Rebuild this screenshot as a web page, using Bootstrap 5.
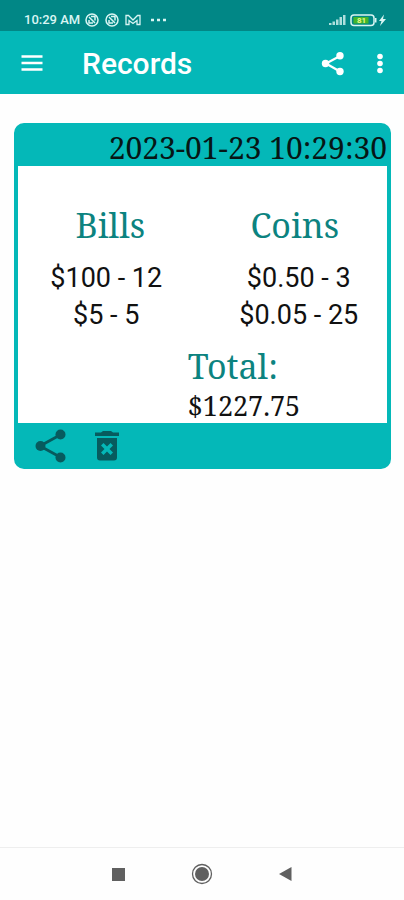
<!DOCTYPE html>
<html lang="en">
<head>
<meta charset="utf-8">
<meta name="viewport" content="width=device-width, initial-scale=1">
<title>Records</title>
<link href="https://cdn.jsdelivr.net/npm/bootstrap@5.3.0/dist/css/bootstrap.min.css" rel="stylesheet">
<style>
  :root { --teal: #04b8b8; --teal-dark: #018786; --ink: #075b5e; }
  body { font-family: Roboto, sans-serif; background: #fefefe; color: #111; }
  .status-strip { height: 31px; padding: 8px 17px 0 24px; background: var(--teal-dark); color: #d9f5f3; font-size: 13px; line-height: 24px; font-weight: 500; }
  .app-bar { height: 63px; padding: 2px 12px 0 20px; background: var(--teal); color: #fff; }
  .app-title { font-size: 30px; line-height: 36px; font-weight: 500; margin-left: 38px; }
  .icon-btn { padding: 0; border: 0; background: none; color: inherit; display: flex; }
  .record { border: 4px solid var(--teal); border-radius: 10px; background: var(--teal); margin: 29px 13px 0 14px; }
  .serif { font-family: "Noto Serif", "Liberation Serif", serif; }
  .stamp { font-size: 30px; line-height: 42px; height: 39px; color: #061616; }
  .heading { font-size: 34px; line-height: 46px; color: #0c8380; font-weight: 400; margin: 0; }
  .record-body { padding-top: 36px; background: #fff; }
  .lines { font-size: 27px; line-height: 37px; margin-top: 12px; }
  .total { padding-top: 9px; margin-left: 46%; }
  .amount { font-size: 27px; line-height: 34px; }
  .record-foot { color: var(--ink); height: 42px; padding: 4px 0 0 17px; gap: 28px; }
  .nav-strip { height: 53px; border-top: 1px solid #eee; color: #606060; padding: 0 111px; }
</style>
<script src="https://cdn.jsdelivr.net/npm/bootstrap@5.3.0/dist/js/bootstrap.bundle.min.js"></script>
</head>
<body class="min-vh-100 d-flex flex-column">
<div class="status-strip d-flex align-items-center">
  <span>10:29 AM</span>
  <svg class="ms-1" width="84" height="16" viewBox="0 0 84 16" fill="none" stroke="currentColor" stroke-width="1.5" aria-hidden="true">
    <g id="sync"><circle cx="8" cy="8" r="6"/><path d="M5 5l6 6M7 4.500h4v4M5 8v3h4"/></g>
    <use href="#sync" x="20"/>
    <path d="M42 12.500V3.500h2.500L49 8l4.500-4.500H56v9h-3V8.500l-4 3-4-3v4z" stroke-width="1.300"/>
    <path d="M67 8h3M73 8h3M79 8h3" stroke-width="2.600"/>
  </svg>
  <svg class="ms-auto" width="58" height="16" viewBox="0 0 58 16" aria-hidden="true">
    <path d="M0 13v-2h2.500v2zM3.500 13V9.500H6V13zM7 13V7.500h2.500V13zM10.500 13V5H13v8zM14 13V3h2.500v10z" fill="currentColor" opacity=".8"/>
    <rect x="22" y="3" width="23" height="10.500" rx="3" fill="none" stroke="currentColor" stroke-width="1.500"/>
    <path d="M46 6h1.500v4.500H46z" fill="currentColor"/>
    <rect x="24.500" y="5" width="15" height="6.500" fill="#42b52b"/>
    <text x="28" y="11" font-size="8" font-weight="700" fill="#eaf98b">81</text>
    <path d="M55 2.500l-5 6.500h2.500L51 14l6-7h-3z" fill="currentColor"/>
  </svg>
</div>
<header class="app-bar d-flex align-items-center">
  <button class="icon-btn" type="button" aria-label="Menu">
    <svg width="24" height="24" viewBox="0 0 24 24" fill="none" stroke="currentColor" stroke-width="2.400"><path d="M1.500 4.500h21M1.500 11h21M1.500 17.500h21"/></svg>
  </button>
  <h1 class="app-title mb-0">Records</h1>
  <button class="icon-btn ms-auto" type="button" aria-label="Share records">
    <svg width="24" height="24" viewBox="0 0 24 24" fill="currentColor"><path d="M20 4L6 11.500l14 8" fill="none" stroke="currentColor" stroke-width="2.200"/><circle cx="20" cy="3.700" r="3.700"/><circle cx="5.500" cy="11.500" r="3.700"/><circle cx="20" cy="19.500" r="3.700"/></svg>
  </button>
  <button class="icon-btn ms-4" type="button" aria-label="More options">
    <svg width="24" height="24" viewBox="0 0 24 24" fill="currentColor"><circle cx="12" cy="4.500" r="2.800"/><circle cx="12" cy="11.500" r="2.800"/><circle cx="12" cy="18.500" r="2.800"/></svg>
  </button>
</header>
<main class="flex-grow-1">
  <article class="record">
    <div class="stamp serif text-end">2023-01-23 10:29:30</div>
    <div class="record-body">
      <div class="row g-0 text-center">
        <section class="col-6"><h2 class="heading serif">Bills</h2><div class="lines pe-2"><div>$100 - 12</div><div>$5 - 5</div></div></section>
        <section class="col-6"><h2 class="heading serif">Coins</h2><div class="lines ps-2"><div>$0.50 - 3</div><div>$0.05 - 25</div></div></section>
      </div>
      <div class="total serif"><h2 class="heading serif">Total:</h2><div class="amount">$1227.75</div></div>
    </div>
    <div class="record-foot d-flex align-items-center">
      <button class="icon-btn" type="button" aria-label="Share record">
        <svg width="32" height="34" viewBox="0 0 32 34" fill="currentColor"><path d="M25 6L5 17l20 11" fill="none" stroke="currentColor" stroke-width="2.800"/><circle cx="25.500" cy="5.500" r="5"/><circle cx="5.500" cy="17" r="5"/><circle cx="25.500" cy="28.500" r="5"/></svg>
      </button>
      <button class="icon-btn" type="button" aria-label="Delete record">
        <svg width="24" height="32" viewBox="0 0 24 32" fill="currentColor"><path d="M0 2.500h6L8 1h8l2 1.500h6V6H0z"/><path fill-rule="evenodd" d="M2 8h20v19.500a3 3 0 0 1-3 3H5a3 3 0 0 1-3-3zM6 15.500l3.500 3.500L6 22.500l2.500 2.500 3.500-3.500 3.500 3.500 2.500-2.500-3.500-3.500 3.500-3.500-2.500-2.500-3.500 3.500L8.500 13z"/></svg>
      </button>
    </div>
  </article>
</main>
<nav class="nav-strip d-flex align-items-center justify-content-between" aria-label="System">
  <button class="icon-btn" type="button" aria-label="Recent apps"><svg width="15" height="15" viewBox="0 0 15 15"><path d="M1 1h13v13H1z" fill="currentColor"/></svg></button>
  <button class="icon-btn" type="button" aria-label="Home"><svg width="22" height="22" viewBox="0 0 22 22"><circle cx="11" cy="11" r="9.500" fill="none" stroke="currentColor" stroke-width="1.300"/><circle cx="11" cy="11" r="7" fill="currentColor"/></svg></button>
  <button class="icon-btn" type="button" aria-label="Back"><svg width="15" height="16" viewBox="0 0 15 16"><path d="M1 8L13.500 1v14z" fill="currentColor"/></svg></button>
</nav>
</body>
</html>
